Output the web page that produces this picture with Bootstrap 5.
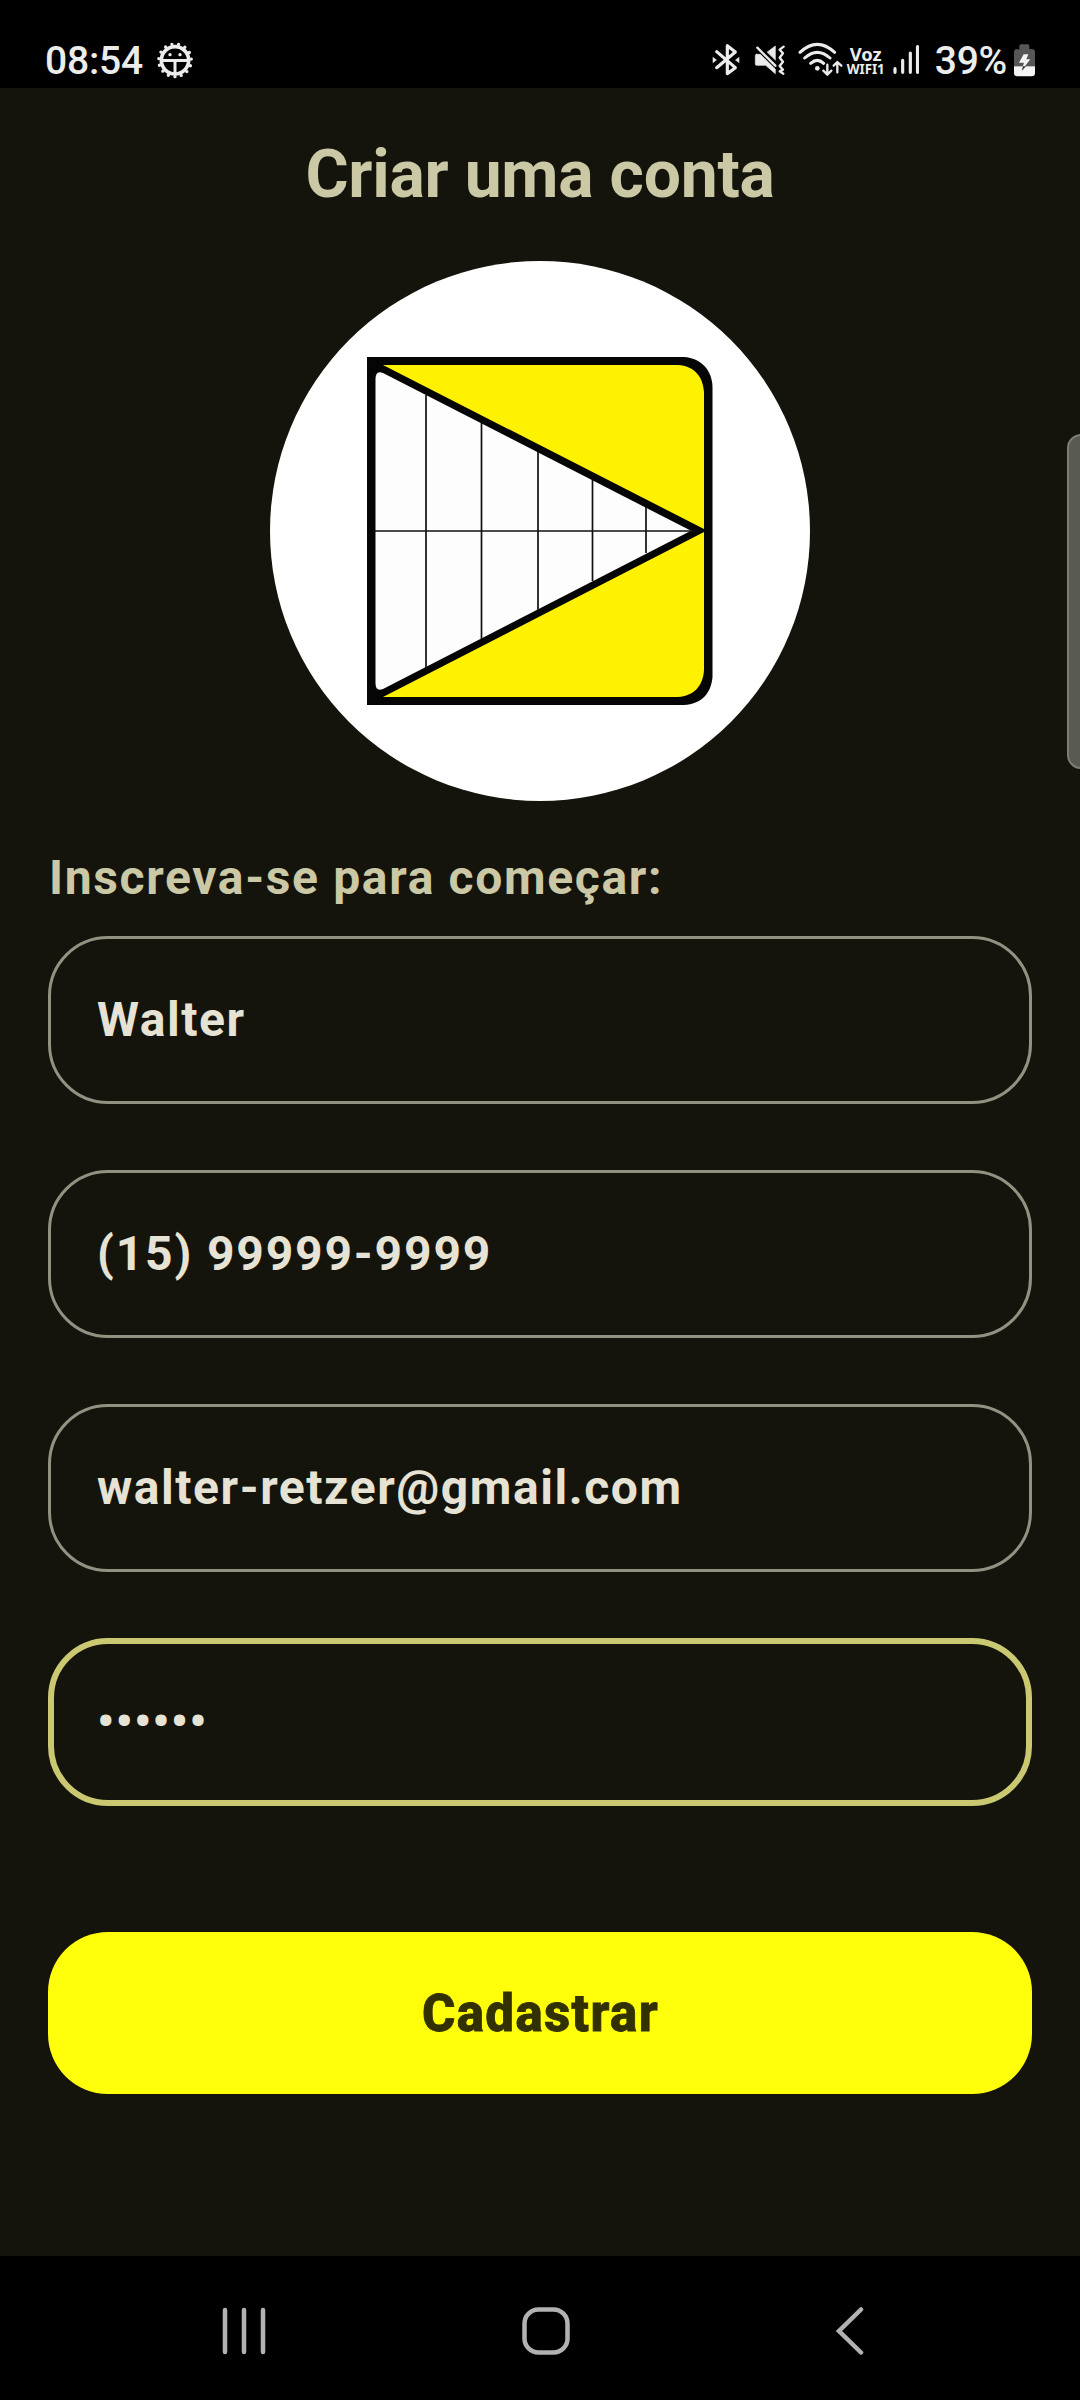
<!DOCTYPE html>
<html lang="pt-BR">
<head>
<meta charset="utf-8">
<meta name="viewport" content="width=device-width, initial-scale=1">
<title>Criar uma conta</title>
<link href="https://cdn.jsdelivr.net/npm/bootstrap@5.3.0/dist/css/bootstrap.min.css" rel="stylesheet">
<style>
  body { font-family: Roboto, "Liberation Sans", sans-serif; background: #14140c; width: 1080px; height: 2400px; overflow: hidden; }
  svg { display: block; flex: none; }
  .status-bar { height: 88px; background: #000; color: #ececec; padding: 31px 45px 0 45px; }
  .status-text { font-size: 39px; line-height: 58px; font-weight: 500; white-space: nowrap; padding-top: 1px; }
  .clock { letter-spacing: -.2px; }
  .gear { margin: 10px 0 0 13px; }
  .indicators { width: 208px; margin-top: 9px; }
  .percent { margin-left: 16px; letter-spacing: -.3px; }
  .battery { margin: 13px 0 0 7px; }
  .screen-body { padding: 0 48px; }
  .screen-title { font-size: 66px; font-weight: 700; line-height: 78px; letter-spacing: -.25px; color: #cac8a5; margin: 48px 0 47px; }
  .logo-disc { width: 540px; height: 540px; background: #fff; }
  .form-lead { font-size: 48px; font-weight: 700; line-height: 60px; letter-spacing: 1.65px; color: #cac8a5; margin: 47px 0 28px 1px; }
  .fields { gap: 66px; }
  .field, .field:focus { height: 168px; border: 3px solid #929282; border-radius: 60px; background: transparent; color: #e6e3d5; font-size: 48px; font-weight: 700; letter-spacing: 1.55px; padding: 0 45px 2px 46px; box-shadow: none; }
  .field[type=tel] { letter-spacing: 1.85px; }
  .field-active, .field-active:focus { border: 6px solid #cac971; padding: 0 42px 2px 43px; letter-spacing: 1.2px; }
  .btn-signup, .btn-signup:hover { height: 162px; margin-top: 126px; border: 0; border-radius: 60px; background: #ffff0c; color: #333100; font-size: 51px; font-weight: 800; letter-spacing: 1.4px; -webkit-text-stroke: .8px #333100; padding: 2px 0 0 1px; }
  .edge-handle { right: -16px; top: 434px; width: 29px; height: 335px; border: 2px solid #7b7b77; border-radius: 14px; background: #595a52; }
  .nav-strip { height: 144px; background: #000; padding: 6px 214px 0 222px; }
  .nav-home { margin-left: 256px; margin-right: 266px; }
</style>
</head>
<body class="d-flex flex-column position-relative m-0">
<header class="status-bar d-flex align-items-start">
  <span class="status-text clock">08:54</span>
  <svg width="38" height="38" viewBox="469 63 114 114" class="gear">
    <circle cx="526" cy="121" r="41" fill="none" stroke="#ececec" stroke-width="11"/>
    <circle cx="526" cy="121" r="49" fill="none" stroke="#ececec" stroke-width="10" stroke-linecap="round" pathLength="150" stroke-dasharray="0 10" transform="rotate(90 526 121)"/>
    <path d="M488 121.500H564M526 122V160" stroke="#ececec" stroke-width="9"/>
    <circle cx="511" cy="104" r="5" fill="#ececec"/><circle cx="541" cy="104" r="5" fill="#ececec"/>
  </svg>
  <div class="d-flex ms-auto">
    <svg height="40" viewBox="36 60 624 120" class="indicators" fill="none" stroke="#ececec" stroke-linecap="round" stroke-linejoin="round">
      <path d="M53 95L109 143L85 161V77L109 96L53 143" stroke-width="9.500"/>
      <path d="M42 112L53 120L42 128ZM120 112L109 120L120 128Z" fill="#ececec" stroke-width="1"/>
      <path d="M175 83L229 137" stroke-width="7"/>
      <path d="M173 103H184L229 147V161L200 136H173Q169 136 169 132V107Q169 103 173 103ZM205 96L229 78V119Z" fill="#ececec" stroke-width="2"/>
      <path d="M254 80L242 89L252 100L242 113L252 125L242 138L252 149L242 154L253 161" stroke-width="7"/>
      <path d="M303 97Q355 49 407 97M317 114Q355 80 393 114M335 130Q355 112 374 130" stroke-width="9"/>
      <circle cx="355" cy="145" r="7" fill="#ececec" stroke="none"/>
      <path d="M385 134V163M373 152L385 164L397 152M415 157V127M404 137L415 126L427 137" stroke-width="7"/>
      <g fill="#ececec" stroke="none" font-family="Noto Sans, sans-serif" font-weight="700">
        <text x="452" y="122" font-size="54" textLength="96" lengthAdjust="spacingAndGlyphs">Voz</text>
        <text x="443" y="162" font-size="42" textLength="114" lengthAdjust="spacingAndGlyphs">WIFI1</text>
      </g>
      <path d="M588 146V157M611 121V157M634 99V157M655.500 80V157" stroke-width="9.500"/>
    </svg>
    <span class="status-text percent">39%</span>
    <svg width="21" height="33" viewBox="942 71 63 99" class="battery">
      <path d="M958 88V77Q958 72 963 72H983Q988 72 988 77V86H995Q1005 86 1005 96V138H942V96Q942 86 952 86Z" fill="#565656"/>
      <path d="M942 138H1005V158Q1005 168 995 168H952Q942 168 942 158Z" fill="#f4f4f4"/>
      <path d="M971 102H985L979 117H991L965 150L972 127H957Z" fill="#f4f4f4"/>
      <path d="M978 138L965 152L969 138Z" fill="#333"/>
    </svg>
  </div>
</header>

<main class="screen-body flex-grow-1 d-flex flex-column">
  <h1 class="screen-title text-center">Criar uma conta</h1>
  <div class="logo-disc rounded-circle align-self-center flex-shrink-0">
    <svg width="540" height="540" viewBox="0 0 540 540">
      <path d="M97 96H414C431 97 442 109 442.500 126V416C441 433 431 443 414 444H97Z" fill="#050505"/>
      <path d="M113 104H408C424 105 433 115 434 131V268ZM113 436H408C424 435 433 425 434 409V271Z" fill="#fff200"/>
      <path d="M105.500 118Q105.500 109 113 112L421 269.800L113 428Q105.500 431 105.500 422Z" fill="#fdfdfd"/>
      <path d="M156 134V407M211.500 162V378M268 191V349M322.500 219V320M376 246V292M105 270H425" stroke="#111" stroke-width="1.700"/>
    </svg>
  </div>
  <p class="form-lead">Inscreva-se para começar:</p>
  <form class="fields d-flex flex-column">
    <input class="form-control field" type="text" value="Walter" aria-label="Nome">
    <input class="form-control field" type="tel" value="(15) 99999-9999" aria-label="Telefone">
    <input class="form-control field" type="email" value="walter-retzer@gmail.com" aria-label="E-mail">
    <input class="form-control field field-active" type="text" value="••••••" aria-label="Senha">
  </form>
  <button class="btn btn-signup w-100" type="button">Cadastrar</button>
</main>

<div class="edge-handle position-absolute"></div>

<nav class="nav-strip d-flex align-items-center">
  <svg width="44" height="50" viewBox="222 2306 44 50" stroke="#b2b2b2" stroke-width="4.500" stroke-linecap="round"><path d="M225 2310V2352M244 2310V2352M263 2310V2352"/></svg>
  <svg class="nav-home" width="48" height="50" viewBox="522 2306 48 50" fill="none" stroke="#b2b2b2" stroke-width="4.500"><rect x="524.500" y="2309.500" width="43" height="43" rx="14"/></svg>
  <svg width="30" height="50" viewBox="836 2306 30 50" fill="none" stroke="#b2b2b2" stroke-width="4.500" stroke-linecap="round"><path d="M861 2309.500L839 2331L861 2352.500"/></svg>
</nav>
<script src="https://cdn.jsdelivr.net/npm/bootstrap@5.3.0/dist/js/bootstrap.bundle.min.js"></script>
</body>
</html>
